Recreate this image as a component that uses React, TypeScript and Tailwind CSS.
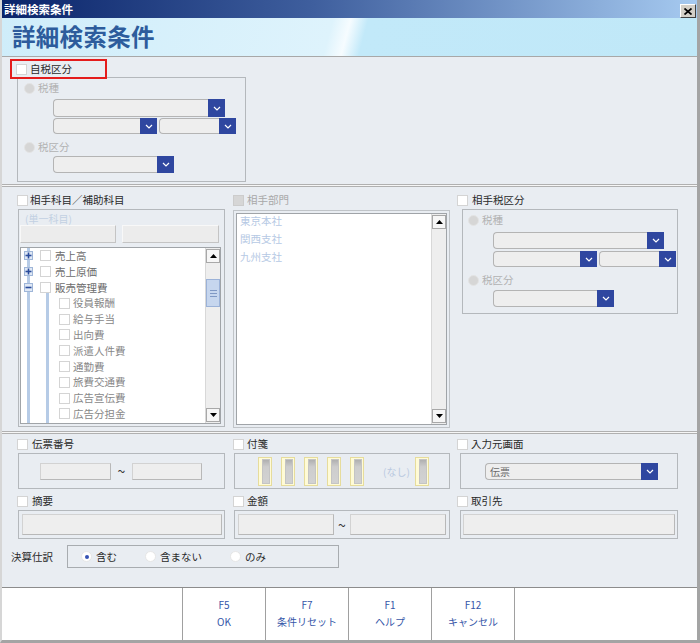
import React from 'react';

const jp = "font-['Noto_Sans_CJK_JP','Noto_Sans_CJK_SC',sans-serif]";

function Check({ disabled }: { disabled?: boolean }) {
  return (
    <span
      className={
        disabled
          ? 'block w-[11px] h-[11px] shrink-0 bg-[#d6d6d6] border border-[#cccccc]'
          : 'block w-[11px] h-[11px] shrink-0 bg-white border border-[#d4d4d4]'
      }
    />
  );
}

function Radio({ kind }: { kind: 'off' | 'on' | 'empty' }) {
  if (kind === 'off') {
    return <span className="block w-[11px] h-[11px] shrink-0 rounded-full bg-[#d6d6d6] border border-[#e4e4e4]" />;
  }
  return (
    <span className="flex w-[11px] h-[11px] shrink-0 rounded-full bg-white border border-[#e6e6e6] items-center justify-center">
      {kind === 'on' && <span className="block w-[4px] h-[4px] rounded-full bg-[#3552b4]" />}
    </span>
  );
}

function Chevron() {
  return (
    <svg width="8" height="5" viewBox="0 0 8 5">
      <polyline points="1,1 4,4 7,1" fill="none" stroke="#ffffff" strokeWidth="1.2" />
    </svg>
  );
}

function Select({ className, text }: { className: string; text?: string }) {
  return (
    <div className={`flex ${className}`}>
      <div className="flex-1 flex items-center rounded-l-[4px] border border-r-0 border-[#b4b4b4] bg-[#eeeeee] pl-[4px] text-[10px] text-[#6a6a6a]">
        {text}
      </div>
      <div className="w-[17px] bg-[#2f47a0] flex items-center justify-center">
        <Chevron />
      </div>
    </div>
  );
}

function Field({ className }: { className: string }) {
  return <div className={`bg-[#eeeeee] border border-[#d2d2d2] border-r-[#b8b8b8] border-b-[#b8b8b8] ${className}`} />;
}

function Arrow({ up }: { up?: boolean }) {
  return (
    <div className="h-[14px] flex items-center justify-center bg-[#f6f6f6] border border-[#a8a8a8]">
      <svg width="7" height="4" viewBox="0 0 7 4">
        {up ? <polygon points="0,4 7,4 3.5,0" fill="#000" /> : <polygon points="0,0 7,0 3.5,4" fill="#000" />}
      </svg>
    </div>
  );
}

function Tile() {
  return (
    <div className="w-[14px] h-[29px] shrink-0 bg-[#fffbd6] border border-[#e6dc9c] pl-[3px] pt-[1px]">
      <div className="w-[8px] h-[25px] bg-[linear-gradient(#b0b0b0,#cdcdcd_30%,#d2d2d2)] border border-[#c4c4c4]" />
    </div>
  );
}

function Expander({ open }: { open?: boolean }) {
  return (
    <svg width="9" height="9" viewBox="0 0 9 9" className="relative">
      <rect x="0.5" y="0.5" width="8" height="8" fill="#dfe8f5" stroke="#9fb6d8" />
      <line x1="1.5" y1="4.5" x2="7.5" y2="4.5" stroke="#2a4c9c" strokeWidth="1.6" />
      {!open && <line x1="4.5" y1="1.5" x2="4.5" y2="7.5" stroke="#2a4c9c" strokeWidth="1.6" />}
    </svg>
  );
}

const topItems = [
  { t: '売上高', open: false },
  { t: '売上原価', open: false },
  { t: '販売管理費', open: true },
];
const subItems = ['役員報酬', '給与手当', '出向費', '派遣人件費', '通勤費', '旅費交通費', '広告宣伝費', '広告分担金'];

const keys = [
  { k: 'F5', l: 'OK' },
  { k: 'F7', l: '条件リセット' },
  { k: 'F1', l: 'ヘルプ' },
  { k: 'F12', l: 'キャンセル' },
];

export default function App() {
  return (
    <div className={`${jp} w-[700px] h-[643px] overflow-hidden flex flex-col bg-[#e9edf2] border-l-2 border-l-[#d6d6d6] border-r-[3px] border-r-[#a4a4a4] border-b-[3px] border-b-[#a4a4a4] text-[#2a2a2a]`}>
      {/* Title bar */}
      <div className="h-[18px] shrink-0 flex items-start justify-between bg-[linear-gradient(to_right,#0a246a,#3f5f9e_45%,#a6caf0)]">
        <span className="pl-[2px] text-[11.5px] leading-[18px] font-bold text-white">詳細検索条件</span>
        <div className="mt-[4px] mr-[1px] w-[16px] h-[14px] flex items-center justify-center bg-[#d4d0c8] border border-t-white border-l-white border-r-[#404040] border-b-[#404040]">
          <svg width="8" height="7" viewBox="0 0 8 7">
            <path d="M0.5 0.5 L7.5 6.5 M7.5 0.5 L0.5 6.5" stroke="#000" strokeWidth="1.7" />
          </svg>
        </div>
      </div>

      {/* Header */}
      <div className="h-[39px] shrink-0 flex items-center pl-[10px] border-b border-[#a8a8a8] bg-[linear-gradient(105deg,#cfedfa_0%,#def3fc_47%,#f6fcff_49.5%,#c2e9f9_52%,#c0e8f8_100%)]">
        <span className="text-[23.5px] font-bold text-[#2d5c9c] tracking-[0.3px]">詳細検索条件</span>
      </div>

      {/* Section 1 */}
      <div className="h-[127px] shrink-0 flex flex-col items-start">
        <div className="relative z-10 mt-[2px] ml-[8px] w-[97px] h-[20px] border-2 border-[#e41c1c] flex items-center pl-[4px] gap-[3px]">
          <Check />
          <span className="text-[10.5px]">自税区分</span>
        </div>
        <div className="-mt-[2px] ml-[15px] w-[229px] h-[105px] border border-[#b4b8bc] pt-[2px] pl-[6px] text-[10.5px] text-[#b2b2b2]">
          <div className="h-[16px] flex items-center gap-[3px]">
            <Radio kind="off" />
            <span>税種</span>
          </div>
          <div className="ml-[29px] mt-[3px]">
            <Select className="w-[172px] h-[18px]" />
            <div className="mt-[1px] flex gap-[2px]">
              <Select className="w-[104px] h-[16px]" />
              <Select className="w-[77px] h-[16px]" />
            </div>
          </div>
          <div className="mt-[5px] h-[16px] flex items-center gap-[3px]">
            <Radio kind="off" />
            <span>税区分</span>
          </div>
          <div className="ml-[29px] mt-[1px]">
            <Select className="w-[121px] h-[17px]" />
          </div>
        </div>
      </div>

      <div className="h-[3px] shrink-0 border-y border-[#b0b0b0] bg-[#f6f6f6]" />

      {/* Section 2 */}
      <div className="h-[244px] shrink-0 flex items-start pt-[5px] text-[10.5px]">
        {/* 相手科目 */}
        <div className="ml-[15px] w-[208px] flex flex-col">
          <div className="h-[16px] flex items-center gap-[2px]">
            <Check />
            <span>相手科目／補助科目</span>
          </div>
          <div className="ml-[1px] mt-[1px] w-[207px] h-[218px] border border-[#b4b8bc]">
            <div className="pl-[6px] pt-[1px] h-[15px] text-[10px] text-[#c2d0e2]">(単一科目)</div>
            <div className="ml-[1px] flex gap-[6px]">
              <div className="w-[96px] h-[18px] bg-[#ececec] border border-t-[#f8f8f8] border-l-[#f8f8f8] border-r-[#c4c4c4] border-b-[#c4c4c4]" />
              <div className="w-[97px] h-[18px] bg-[#ececec] border border-t-[#f8f8f8] border-l-[#f8f8f8] border-r-[#c4c4c4] border-b-[#c4c4c4]" />
            </div>
            <div className="ml-[1px] mt-[4px] w-[201px] h-[177px] flex border border-[#a0a4a8] bg-white">
              <div className="relative flex-1 overflow-hidden">
                <div className="absolute left-[6px] top-0 bottom-0 w-[3px] bg-[#b6cbe6]" />
                <div className="absolute left-[25px] top-[44px] bottom-0 w-[3px] bg-[#b6cbe6]" />
                {topItems.map((it) => (
                  <div key={it.t} className="relative h-[15.8px] flex items-center text-[#6c6c6c]">
                    <div className="w-[19px] pl-[3px] flex items-center">
                      <Expander open={it.open} />
                    </div>
                    <Check />
                    <span className="ml-[4px]">{it.t}</span>
                  </div>
                ))}
                {subItems.map((t) => (
                  <div key={t} className="relative h-[15.8px] flex items-center pl-[38px] text-[#888888]">
                    <Check />
                    <span className="ml-[3px]">{t}</span>
                  </div>
                ))}
              </div>
              <div className="w-[15px] flex flex-col bg-[#eeeeee] border-l border-[#d8d8d8] py-[1px]">
                <Arrow up />
                <div className="flex-1">
                  <div className="mt-[16px] h-[28px] bg-[#c6d6ee] border border-[#9bb2d8] flex flex-col items-center justify-center gap-[2px]">
                    <span className="block w-[7px] h-px bg-[#7f98c4]" />
                    <span className="block w-[7px] h-px bg-[#7f98c4]" />
                    <span className="block w-[7px] h-px bg-[#7f98c4]" />
                  </div>
                </div>
                <Arrow />
              </div>
            </div>
          </div>
        </div>

        {/* 相手部門 */}
        <div className="ml-[8px] w-[217px] flex flex-col">
          <div className="h-[16px] flex items-center gap-[3px] text-[#a8a8a8]">
            <Check disabled />
            <span>相手部門</span>
          </div>
          <div className="mt-[2px] w-[217px] h-[218px] border border-[#c0c4c8] p-[2px]">
            <div className="h-full flex border border-[#a0a4a8] bg-white">
              <div className="flex-1 pl-[3px] flex flex-col gap-[4px] text-[10.5px] leading-[14px] text-[#b6c9e4]">
                <span>東京本社</span>
                <span>関西支社</span>
                <span>九州支社</span>
              </div>
              <div className="w-[15px] flex flex-col bg-[#eeeeee] border-l border-[#d8d8d8] py-[1px]">
                <Arrow up />
                <div className="flex-1" />
                <Arrow />
              </div>
            </div>
          </div>
        </div>

        {/* 相手税区分 */}
        <div className="ml-[7px] w-[221px] flex flex-col">
          <div className="h-[16px] flex items-center gap-[4px]">
            <Check />
            <span>相手税区分</span>
          </div>
          <div className="ml-[5px] mt-[1px] w-[216px] h-[105px] border border-[#b4b8bc] pt-[2px] pl-[5px] text-[#b2b2b2]">
            <div className="h-[16px] flex items-center gap-[3px]">
              <Radio kind="off" />
              <span>税種</span>
            </div>
            <div className="ml-[25px] mt-[4px]">
              <Select className="w-[171px] h-[17px]" />
              <div className="mt-[2px] flex gap-[2px]">
                <Select className="w-[104px] h-[16px]" />
                <Select className="w-[77px] h-[16px]" />
              </div>
            </div>
            <div className="mt-[5px] h-[16px] flex items-center gap-[3px]">
              <Radio kind="off" />
              <span>税区分</span>
            </div>
            <div className="ml-[25px] mt-[2px]">
              <Select className="w-[121px] h-[17px]" />
            </div>
          </div>
        </div>
      </div>

      <div className="h-[3px] shrink-0 border-y border-[#b0b0b0] bg-[#f6f6f6]" />

      {/* Section 3 */}
      <div className="h-[153px] shrink-0 flex flex-col text-[10.5px]">
        {/* Row A */}
        <div className="pt-[2px] flex items-start">
          <div className="ml-[15px] w-[208px] flex flex-col">
            <div className="h-[16px] flex items-center gap-[4px]">
              <Check />
              <span>伝票番号</span>
            </div>
            <div className="ml-[1px] mt-[1px] w-[207px] h-[36px] border border-[#b4b8bc] flex items-center pl-[21px]">
              <Field className="w-[71px] h-[17px]" />
              <span className="w-[21px] text-center text-[14px] leading-[14px] text-[#333]">~</span>
              <Field className="w-[70px] h-[17px]" />
            </div>
          </div>
          <div className="ml-[8px] w-[217px] flex flex-col">
            <div className="h-[16px] flex items-center gap-[3px]">
              <Check />
              <span>付箋</span>
            </div>
            <div className="ml-[1px] mt-[1px] w-[216px] h-[36px] border border-[#b4b8bc] flex items-center pl-[23px]">
              <div className="flex gap-[9px]">
                <Tile />
                <Tile />
                <Tile />
                <Tile />
                <Tile />
              </div>
              <span className="ml-[19px] w-[32px] text-[10px] text-[#b8c8e0]">(なし)</span>
              <Tile />
            </div>
          </div>
          <div className="ml-[7px] w-[221px] flex flex-col">
            <div className="h-[16px] flex items-center gap-[3px]">
              <Check />
              <span>入力元画面</span>
            </div>
            <div className="ml-[3px] mt-[1px] w-[218px] h-[36px] border border-[#b4b8bc] flex items-center pl-[24px]">
              <Select className="w-[173px] h-[17px]" text="伝票" />
            </div>
          </div>
        </div>

        {/* Row B */}
        <div className="mt-[4px] flex items-start">
          <div className="ml-[15px] w-[208px] flex flex-col">
            <div className="h-[16px] flex items-center gap-[4px]">
              <Check />
              <span>摘要</span>
            </div>
            <div className="ml-[1px] mt-[1px] w-[207px] h-[29px] border border-[#b4b8bc] flex items-center pl-[3px]">
              <Field className="w-[200px] h-[21px]" />
            </div>
          </div>
          <div className="ml-[8px] w-[217px] flex flex-col">
            <div className="h-[16px] flex items-center gap-[3px]">
              <Check />
              <span>金額</span>
            </div>
            <div className="ml-[1px] mt-[1px] w-[216px] h-[29px] border border-[#b4b8bc] flex items-center pl-[3px]">
              <Field className="w-[96px] h-[21px]" />
              <span className="w-[16px] text-center text-[14px] leading-[14px] text-[#333]">~</span>
              <Field className="w-[96px] h-[21px]" />
            </div>
          </div>
          <div className="ml-[7px] w-[221px] flex flex-col">
            <div className="h-[16px] flex items-center gap-[3px]">
              <Check />
              <span>取引先</span>
            </div>
            <div className="ml-[3px] mt-[1px] w-[218px] h-[29px] border border-[#b4b8bc] flex items-center pl-[2px]">
              <Field className="w-[212px] h-[21px]" />
            </div>
          </div>
        </div>

        {/* Row C */}
        <div className="mt-[6px] flex items-center">
          <span className="ml-[9px] w-[56px]">決算仕訳</span>
          <div className="w-[272px] h-[23px] border border-[#a8acb0] flex items-center pl-[13px]">
            <div className="w-[64px] flex items-center gap-[4px]">
              <Radio kind="on" />
              <span>含む</span>
            </div>
            <div className="w-[85px] flex items-center gap-[4px]">
              <Radio kind="empty" />
              <span>含まない</span>
            </div>
            <div className="flex items-center gap-[4px]">
              <Radio kind="empty" />
              <span>のみ</span>
            </div>
          </div>
        </div>
      </div>

      {/* Footer */}
      <div className="h-[53px] shrink-0 flex bg-white border-t border-[#8c8c8c]">
        <div className="w-[180px]" />
        {keys.map((b, i) => (
          <div
            key={b.k}
            className={
              i === keys.length - 1
                ? 'w-[84px] border-x border-[#a0a0a0] flex flex-col items-center pt-[8px] text-[10px] leading-[17px] text-[#3656a8]'
                : 'w-[83px] border-l border-[#a0a0a0] flex flex-col items-center pt-[8px] text-[10px] leading-[17px] text-[#3656a8]'
            }
          >
            <span>{b.k}</span>
            <span>{b.l}</span>
          </div>
        ))}
      </div>
    </div>
  );
}
